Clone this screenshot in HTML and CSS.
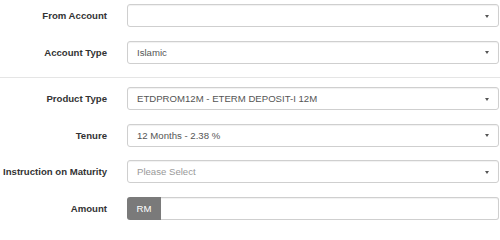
FILE: index.html
```html
<!DOCTYPE html>
<html>
<head>
<meta charset="utf-8">
<link rel="stylesheet" href="styles.css">
</head>
<body>
<form class="form">
  <div class="group first">
    <div class="row">
      <label class="label">From Account</label>
      <div class="select"><span class="value"></span><span class="caret"></span></div>
    </div>
    <div class="row">
      <label class="label">Account Type</label>
      <div class="select"><span class="value">Islamic</span><span class="caret"></span></div>
    </div>
  </div>
  <hr class="sep">
  <div class="group">
    <div class="row">
      <label class="label">Product Type</label>
      <div class="select"><span class="value">ETDPROM12M - ETERM DEPOSIT-I 12M</span><span class="caret"></span></div>
    </div>
    <div class="row">
      <label class="label">Tenure</label>
      <div class="select"><span class="value">12 Months - 2.38 %</span><span class="caret"></span></div>
    </div>
    <div class="row">
      <label class="label">Instruction on Maturity</label>
      <div class="select"><span class="value placeholder">Please Select</span><span class="caret"></span></div>
    </div>
    <div class="row">
      <label class="label">Amount</label>
      <div class="input-group">
        <span class="addon">RM</span>
        <span class="amount"></span>
      </div>
    </div>
  </div>
</form>
</body>
</html>
```

FILE: styles.css
```css
html, body {
  margin: 0;
  padding: 0;
  background: #fff;
}
body {
  font-family: "Liberation Sans", Arial, sans-serif;
  font-size: 9.6px;
  color: #333;
  width: 500px;
  height: 224px;
  overflow: hidden;
}
.form {
  margin: 0;
}
.group {
  display: flex;
  flex-direction: column;
  gap: 13.5px;
}
.group.first {
  padding-top: 4px;
}
.sep {
  border: 0;
  border-top: 1px solid #e5e5e5;
  margin: 13px 0 9.5px 0;
  height: 0;
}
.row {
  display: flex;
  align-items: center;
  height: 23px;
}
.label {
  width: 107px;
  flex: none;
  text-align: right;
  font-weight: bold;
  color: #333;
  margin-right: 20px;
}
.select {
  flex: none;
  width: 372px;
  height: 23px;
  box-sizing: border-box;
  border: 1px solid #cfcfcf;
  border-radius: 3px;
  box-shadow: inset 0 1px 1px rgba(0,0,0,0.06);
  display: flex;
  align-items: center;
  padding: 0 9px 0 9px;
  color: #555;
}
.value {
  flex: 1;
  white-space: nowrap;
}
.placeholder {
  color: #999;
}
.caret {
  width: 0;
  height: 0;
  border-left: 2.5px solid transparent;
  border-right: 2.5px solid transparent;
  border-top: 3px solid #555;
  margin-top: 1px;
}
.input-group {
  flex: none;
  width: 372px;
  height: 23px;
  display: flex;
}
.addon {
  width: 34px;
  flex: none;
  background: #7a7a7a;
  color: #fff;
  border-radius: 3px 0 0 3px;
  display: flex;
  align-items: center;
  justify-content: center;
}
.amount {
  flex: 1;
  box-sizing: border-box;
  border: 1px solid #cfcfcf;
  border-left: 0;
  border-radius: 0 3px 3px 0;
  box-shadow: inset 0 1px 1px rgba(0,0,0,0.06);
}
```
